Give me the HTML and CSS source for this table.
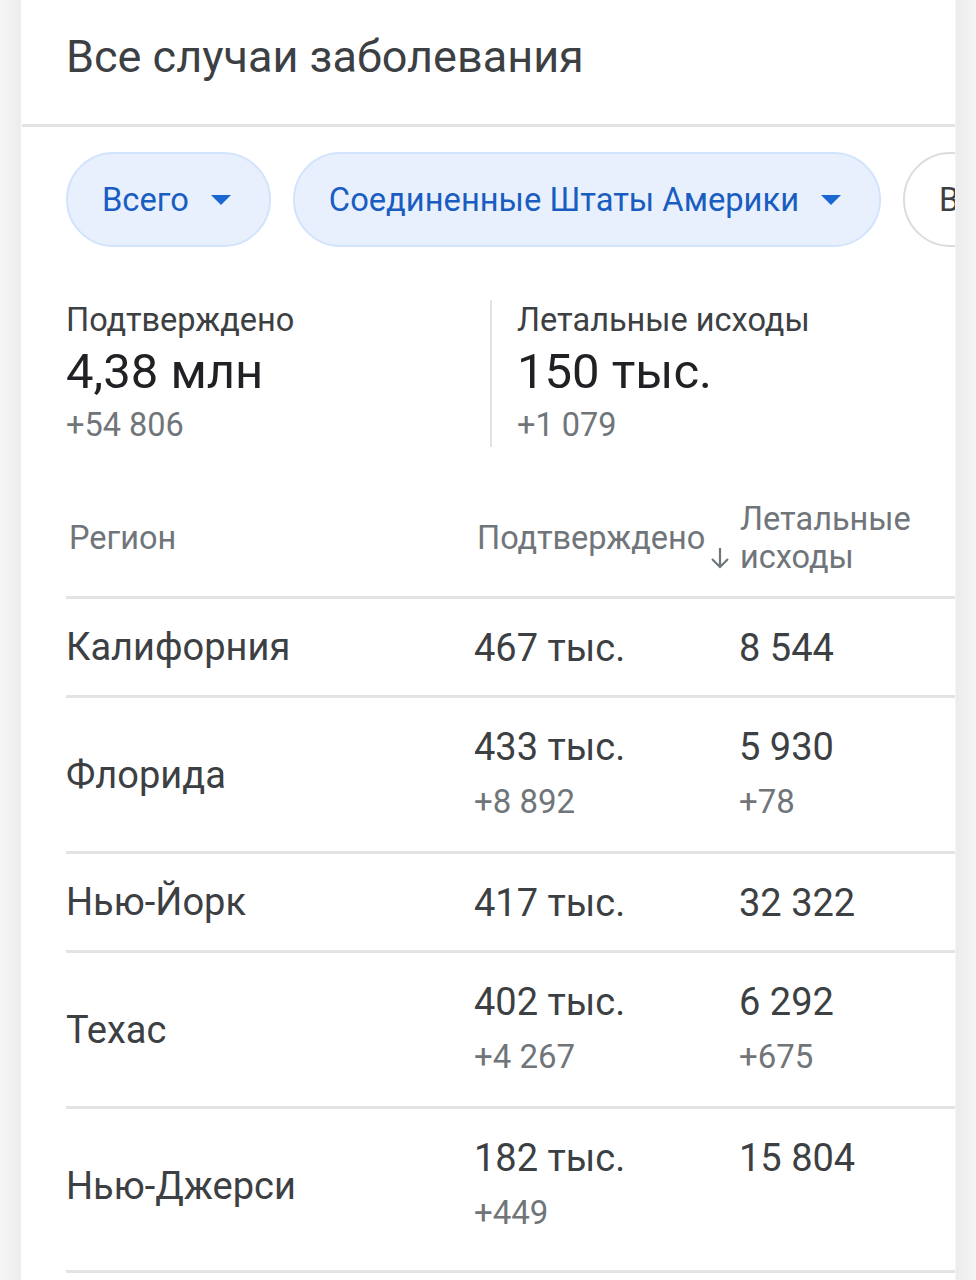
FILE: index.html
```html
<!DOCTYPE html>
<html lang="ru">
<head>
<meta charset="utf-8">
<link rel="stylesheet" href="styles.css">
</head>
<body>
<div class="page">
  <div class="card">
    <header class="card-head">
      <h1 class="title">Все случаи заболевания</h1>
    </header>
    <div class="chips">
      <div class="chip chip-active"><span>Всего</span><svg class="caret" viewBox="0 0 20 10" width="20" height="10"><path d="M0 0h20L10 10z"/></svg></div>
      <div class="chip chip-active"><span>Соединенные Штаты Америки</span><svg class="caret" viewBox="0 0 20 10" width="20" height="10"><path d="M0 0h20L10 10z"/></svg></div>
      <div class="chip chip-plain"><span>В</span></div>
    </div>
    <div class="stats">
      <div class="stat">
        <div class="stat-label">Подтверждено</div>
        <div class="stat-value">4,38 млн</div>
        <div class="stat-delta">+54 806</div>
      </div>
      <div class="stat stat-right">
        <div class="stat-label">Летальные исходы</div>
        <div class="stat-value">150 тыс.</div>
        <div class="stat-delta">+1 079</div>
      </div>
    </div>
    <div class="table">
      <div class="row head">
        <div class="cell region-h">Регион</div>
        <div class="cell conf-h">Подтверждено</div>
        <div class="cell death-h"><svg class="arrow" viewBox="0 0 24 24" width="24" height="24"><path d="M12 2v19M4 13l8 8 8-8"/></svg><span class="death-label">Летальные<br>исходы</span></div>
      </div>
      <div class="row">
        <div class="cell region">Калифорния</div>
        <div class="cell num"><div>467 тыс.</div></div>
        <div class="cell num"><div>8 544</div></div>
      </div>
      <div class="row">
        <div class="cell region">Флорида</div>
        <div class="cell num"><div>433 тыс.</div><div class="delta">+8 892</div></div>
        <div class="cell num"><div>5 930</div><div class="delta">+78</div></div>
      </div>
      <div class="row">
        <div class="cell region">Нью-Йорк</div>
        <div class="cell num"><div>417 тыс.</div></div>
        <div class="cell num"><div>32 322</div></div>
      </div>
      <div class="row">
        <div class="cell region">Техас</div>
        <div class="cell num"><div>402 тыс.</div><div class="delta">+4 267</div></div>
        <div class="cell num"><div>6 292</div><div class="delta">+675</div></div>
      </div>
      <div class="row last">
        <div class="cell region">Нью-Джерси</div>
        <div class="cell num"><div>182 тыс.</div><div class="delta">+449</div></div>
        <div class="cell num"><div>15 804</div></div>
      </div>
    </div>
  </div>
</div>
</body>
</html>
```
FILE: styles.css
```css
html, body {
  margin: 0;
  padding: 0;
}
body {
  font-family: Roboto, "Noto Sans", sans-serif;
  background: #f3f3f3;
  width: 976px;
  height: 1280px;
  overflow: hidden;
}
.page {
  display: flex;
  height: 1280px;
  background: linear-gradient(to right, #f6f6f6 0, #ececec 20px, #ffffff 22px, #ffffff 955px, #ececec 956px, #f5f5f5 976px);
}
.card {
  margin-left: 22px;
  width: 933px;
  background: #fff;
  overflow: hidden;
}
.card-head {
  height: 127px;
  border-bottom: 3px solid #e3e3e3;
  padding-left: 44px;
  box-sizing: border-box;
}
.title {
  margin: 0;
  padding-top: 31px;
  font-size: 45px;
  font-weight: 400;
  line-height: 52px;
  color: #3c4043;
}
.chips {
  display: flex;
  gap: 22px;
  padding: 25px 0 0 44px;
  white-space: nowrap;
  overflow: hidden;
}
.chip {
  flex: none;
  height: 95px;
  box-sizing: border-box;
  border-radius: 48px;
  display: flex;
  align-items: center;
  gap: 22px;
  padding: 0 38px 0 34px;
  font-size: 32.7px;
}
.chip-active {
  background: #e8f0fe;
  border: 2px solid #d2e3fc;
  color: #1a5dc0;
}
.caret {
  fill: #1a66d2;
}
.chip-plain {
  border: 2px solid #dadce0;
  color: #3c4043;
  padding-left: 34px;
}
.stats {
  display: flex;
  padding: 53px 0 0 44px;
}
.stat {
  width: 424px;
  border-right: 2px solid #e3e3e3;
  height: 147px;
}
.stat-right {
  border-right: none;
  padding-left: 25px;
}
.stat-label {
  font-size: 32.5px;
  line-height: 40px;
  color: #3c4043;
}
.stat-value {
  font-size: 49px;
  line-height: 64px;
  color: #202124;
}
.stat-delta {
  font-size: 32.5px;
  line-height: 42px;
  color: #70757a;
}
.table {
  margin-left: 44px;
  margin-top: 33px;
}
.row {
  display: grid;
  grid-template-columns: 408px 265px 1fr;
  align-items: center;
  border-bottom: 3px solid #e3e3e3;
  min-height: 99px;
  box-sizing: border-box;
}
.row.head {
  height: 119px;
}
.cell {
  font-size: 38px;
  color: #3c4043;
}
.region-h, .conf-h, .death-h {
  font-size: 32.5px;
  color: #70757a;
}
.region-h {
  padding-left: 3px;
}
.conf-h {
  padding-left: 3px;
}
.death-h {
  display: flex;
  align-items: flex-end;
  margin-left: -31px;
  gap: 8px;
}
.arrow {
  flex: none;
  fill: none;
  stroke: #70757a;
  stroke-width: 2.2;
  margin-bottom: 6px;
}
.death-label {
  line-height: 38px;
}
.num {
  align-self: start;
  padding: 27px 0 16px;
  line-height: 44px;
}
.delta {
  font-size: 33px;
  color: #70757a;
  line-height: 66px;
}
.row.last {
  padding-bottom: 8px;
}
```
